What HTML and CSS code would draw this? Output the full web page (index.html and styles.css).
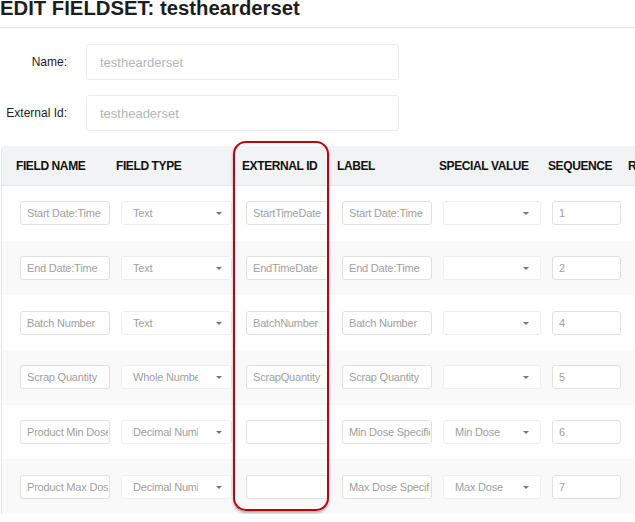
FILE: index.html
```html
<!DOCTYPE html>
<html lang="en">
<head>
  <meta charset="UTF-8" />
  <title>Edit Fieldset</title>
  <link rel="stylesheet" href="styles.css">
</head>
<body>
  <h1 class="page-title">EDIT FIELDSET: testhearderset</h1>

  <form class="fieldset-form">
    <div class="form-row">
      <label for="fsName">Name:</label>
      <input id="fsName" class="form-input" placeholder="testhearderset" />
    </div>
    <div class="form-row">
      <label for="fsExternal">External Id:</label>
      <input id="fsExternal" class="form-input" placeholder="testheaderset" />
    </div>
  </form>

  <div class="fields-table">
    <div class="table-head">
      <div>FIELD NAME</div>
      <div>FIELD TYPE</div>
      <div>EXTERNAL ID</div>
      <div>LABEL</div>
      <div>SPECIAL VALUE</div>
      <div>SEQUENCE</div>
      <div>REQUIRED</div>
    </div>

    <div class="table-body">
      <div class="table-row">
        <input class="cell-input w-name" value="Start Date:Time" />
        <div class="cell-select w-type"><span>Text</span></div>
        <input class="cell-input w-ext" value="StartTimeDate" />
        <input class="cell-input w-label" value="Start Date:Time" />
        <div class="cell-select w-special"><span></span></div>
        <input class="cell-input w-seq" value="1" />
      </div>
      <div class="table-row">
        <input class="cell-input w-name" value="End Date:Time" />
        <div class="cell-select w-type"><span>Text</span></div>
        <input class="cell-input w-ext" value="EndTimeDate" />
        <input class="cell-input w-label" value="End Date:Time" />
        <div class="cell-select w-special"><span></span></div>
        <input class="cell-input w-seq" value="2" />
      </div>
      <div class="table-row">
        <input class="cell-input w-name" value="Batch Number" />
        <div class="cell-select w-type"><span>Text</span></div>
        <input class="cell-input w-ext" value="BatchNumber" />
        <input class="cell-input w-label" value="Batch Number" />
        <div class="cell-select w-special"><span></span></div>
        <input class="cell-input w-seq" value="4" />
      </div>
      <div class="table-row">
        <input class="cell-input w-name" value="Scrap Quantity" />
        <div class="cell-select w-type"><span>Whole Number</span></div>
        <input class="cell-input w-ext" value="ScrapQuantity" />
        <input class="cell-input w-label" value="Scrap Quantity" />
        <div class="cell-select w-special"><span></span></div>
        <input class="cell-input w-seq" value="5" />
      </div>
      <div class="table-row">
        <input class="cell-input w-name" value="Product Min Dose" />
        <div class="cell-select w-type"><span>Decimal Number</span></div>
        <input class="cell-input w-ext" value="" />
        <input class="cell-input w-label" value="Min Dose Specification" />
        <div class="cell-select w-special"><span>Min Dose</span></div>
        <input class="cell-input w-seq" value="6" />
      </div>
      <div class="table-row">
        <input class="cell-input w-name" value="Product Max Dose" />
        <div class="cell-select w-type"><span>Decimal Number</span></div>
        <input class="cell-input w-ext" value="" />
        <input class="cell-input w-label" value="Max Dose Specification" />
        <div class="cell-select w-special"><span>Max Dose</span></div>
        <input class="cell-input w-seq" value="7" />
      </div>
    </div>
  </div>

  <!-- highlight round the external id column -->
  <div class="callout" aria-hidden="true"></div>
</body>
</html>
```

FILE: styles.css
```css
/* BASE */
* { box-sizing: border-box; }
body {
  margin: 0;
  font-family: "Liberation Sans", Arial, sans-serif;
  color: #222;
  background: #fff;
  overflow: hidden;
  position: relative;
}

.page-title {
  margin: -2px 0 0;
  padding: 0 0 9px;
  font-size: 20.3px;
  line-height: 20px;
  font-weight: bold;
  color: #1d1d1d;
  border-bottom: 1px solid #e2e2e2;
}

/* TOP FORM */
.fieldset-form {
  display: flex;
  flex-direction: column;
  gap: 15px;
  margin-top: 16px;
}
.form-row {
  display: flex;
  align-items: center;
  gap: 19px;
}
.form-row label {
  width: 67px;
  text-align: right;
  font-size: 12px;
  color: #222;
}
.form-input {
  width: 313px;
  height: 36px;
  border: 1px solid #ececec;
  border-radius: 3px;
  padding: 0 13px;
  font: 13px "Liberation Sans", Arial, sans-serif;
  outline: none;
}
.form-input::placeholder { color: #b5b5b5; }

/* FIELDS TABLE */
.fields-table {
  margin: 15px 0 0 1px;
  width: 720px;
  border-left: 1px solid #e4e4e4;
  border-top-left-radius: 4px;
}
.table-head,
.table-row {
  display: grid;
  grid-template-columns: 100px 126px 95px 102px 109px 80px 80px;
  align-items: center;
  padding-left: 14px;
}
.table-head {
  height: 40px;
  background: #f2f3f5;
  border-bottom: 1px solid #e5e6e8;
  border-top-left-radius: 4px;
  font-size: 12px;
  font-weight: bold;
  letter-spacing: -0.4px;
  color: #111;
}
.table-row { height: 54.67px; }
.table-body .table-row:nth-child(even) { background: #f9f9f9; }

.cell-input {
  margin-left: 4px;
  height: 24px;
  border: 1px solid #e0e0e0;
  border-radius: 3px;
  padding: 0 1px 0 6px;
  background: #fff;
  font: 11px "Liberation Sans", Arial, sans-serif;
  letter-spacing: -0.2px;
  color: #a0a0a0;
  outline: none;
}
.w-name { width: 90px; }
.w-ext { width: 83px; }
.w-label { width: 90px; margin-left: 5px; }
.w-seq { width: 69px; }

.cell-select {
  position: relative;
  display: flex;
  align-items: center;
  margin-left: 4px;
  height: 24px;
  padding-left: 11px;
  border: 1px solid #efefef;
  border-radius: 3px;
  background: #fff;
}
.cell-select span {
  width: 65px;
  overflow: hidden;
  white-space: nowrap;
  font-size: 11px;
  letter-spacing: -0.2px;
  color: #a0a0a0;
}
.cell-select::after {
  content: "";
  position: absolute;
  right: 9px;
  top: 50%;
  margin-top: -1px;
  border-left: 3px solid transparent;
  border-right: 3px solid transparent;
  border-top: 3px solid #777;
}
.w-type { width: 111px; margin-left: 5px; }
.w-special { width: 98px; }
.w-special::after { right: 11px; }

/* RED HIGHLIGHT */
.callout {
  position: absolute;
  left: 233px;
  top: 141px;
  width: 96px;
  height: 370px;
  border: 2px solid #c0000c;
  border-radius: 13px;
  box-shadow: 0 2px 3px rgba(0, 0, 0, 0.3);
  pointer-events: none;
}
```
